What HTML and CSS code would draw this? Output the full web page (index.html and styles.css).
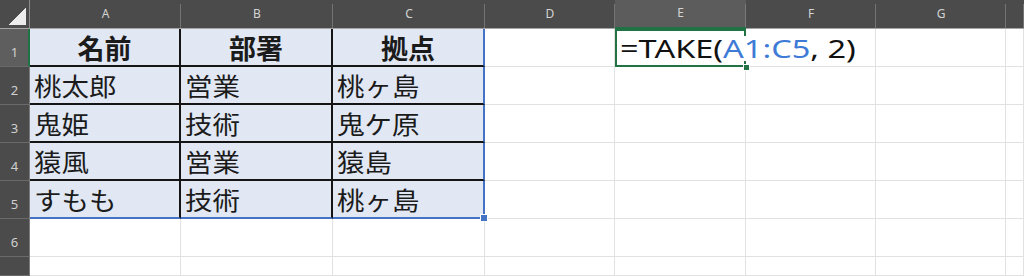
FILE: index.html
```html
<!DOCTYPE html>
<html lang="ja">
<head>
<meta charset="utf-8">
<title>TAKE</title>
<link rel="stylesheet" href="styles.css">
</head>
<body>
<div class="sheet">
  <div class="corner"><span class="tri"></span></div>
  <div class="ch">A</div>
  <div class="ch">B</div>
  <div class="ch">C</div>
  <div class="ch">D</div>
  <div class="ch sel">E</div>
  <div class="ch">F</div>
  <div class="ch">G</div>
  <div class="ch"></div>

  <div class="rh sel">1</div>
  <div class="c t head"><span class="jp">名前</span></div>
  <div class="c t head"><span class="jp">部署</span></div>
  <div class="c t head lc"><span class="jp">拠点</span></div>
  <div class="c"></div>
  <div class="c active"><span class="formula">=TAKE(<span class="ref">A1:C5</span>, 2)</span></div>
  <div class="c"></div>
  <div class="c"></div>
  <div class="c"></div>

  <div class="rh">2</div>
  <div class="c t"><span class="jp">桃太郎</span></div>
  <div class="c t"><span class="jp">営業</span></div>
  <div class="c t lc"><span class="jp">桃ヶ島</span></div>
  <div class="c"></div>
  <div class="c"></div>
  <div class="c"></div>
  <div class="c"></div>
  <div class="c"></div>

  <div class="rh">3</div>
  <div class="c t"><span class="jp">鬼姫</span></div>
  <div class="c t"><span class="jp">技術</span></div>
  <div class="c t lc"><span class="jp">鬼ケ原</span></div>
  <div class="c"></div>
  <div class="c"></div>
  <div class="c"></div>
  <div class="c"></div>
  <div class="c"></div>

  <div class="rh">4</div>
  <div class="c t"><span class="jp">猿風</span></div>
  <div class="c t"><span class="jp">営業</span></div>
  <div class="c t lc"><span class="jp">猿島</span></div>
  <div class="c"></div>
  <div class="c"></div>
  <div class="c"></div>
  <div class="c"></div>
  <div class="c"></div>

  <div class="rh">5</div>
  <div class="c t lr"><span class="jp">すもも</span></div>
  <div class="c t lr"><span class="jp">技術</span></div>
  <div class="c t lc lr handle"><span class="jp">桃ヶ島</span></div>
  <div class="c"></div>
  <div class="c"></div>
  <div class="c"></div>
  <div class="c"></div>
  <div class="c"></div>

  <div class="rh">6</div>
  <div class="c"></div>
  <div class="c"></div>
  <div class="c"></div>
  <div class="c"></div>
  <div class="c"></div>
  <div class="c"></div>
  <div class="c"></div>
  <div class="c"></div>

  <div class="rh"></div>
  <div class="c"></div>
  <div class="c"></div>
  <div class="c"></div>
  <div class="c"></div>
  <div class="c"></div>
  <div class="c"></div>
  <div class="c"></div>
  <div class="c"></div>
</div>
</body>
</html>
```

FILE: styles.css
```css
html, body {
  margin: 0;
  padding: 0;
  background: #ffffff;
  overflow: hidden;
}

.sheet {
  display: grid;
  grid-template-columns: 30px 151px 152px 152px 130px 131px 130px 130px 1fr;
  grid-template-rows: 29px repeat(6, 38px) 1fr;
  width: 1024px;
  height: 276px;
  font-family: "Noto Sans", "Noto Sans CJK JP", sans-serif;
}

.sheet > div {
  box-sizing: border-box;
  min-width: 0;
}

.corner {
  background: #4b4b4b;
  border-right: 1px solid #8a8a8a;
  border-bottom: 1px solid #a5a5a5;
  display: flex;
  align-items: flex-end;
  justify-content: flex-end;
  padding: 0 3px 3px 0;
}

.tri {
  display: block;
  width: 17px;
  height: 17px;
  background: linear-gradient(to bottom right, transparent 50%, #ececec 50%);
}

.ch {
  background: linear-gradient(to right, transparent calc(100% - 1px), #747474 0) 0 4px / 100% 100% no-repeat, #4b4b4b;
  border-bottom: 1px solid #a5a5a5;
  color: #d4d4d4;
  font-size: 12px;
  display: flex;
  align-items: center;
  justify-content: center;
  padding-bottom: 2px;
}

.ch.sel {
  background: linear-gradient(to right, transparent calc(100% - 1px), #7a7a7a 0) 0 4px / 100% 100% no-repeat, #5c5c5c;
  border-bottom: 2px solid #1f7244;
}

.rh {
  background: #4b4b4b;
  border-right: 1px solid #7c7c7c;
  border-bottom: 1px solid #6a6a6a;
  color: #d0d0d0;
  font-size: 13px;
  line-height: 1;
  display: flex;
  align-items: flex-end;
  justify-content: center;
  padding-bottom: 7px;
}

.rh.sel {
  background: #5e5e5e;
  border-right: 2px solid #1f7244;
  padding-left: 1px;
}

.c {
  border-right: 1px solid #e1e1e1;
  border-bottom: 1px solid #e1e1e1;
  display: flex;
  align-items: center;
}

.t {
  background: #e1e8f4;
  border-right: 2px solid #151515;
  border-bottom: 2px solid #151515;
  padding-left: 4px;
  color: #1b1b1b;
}

.t.lc { border-right-color: #4472c4; }
.t.lr { border-bottom-color: #4472c4; }

.jp {
  display: inline-block;
  font-family: "Noto Sans CJK JP", sans-serif;
  font-size: 25px;
  line-height: 1;
  transform: scaleX(1.1);
  transform-origin: left center;
  white-space: nowrap;
}

.head {
  justify-content: center;
  padding-left: 0;
}

.head .jp {
  font-weight: 700;
  font-size: 27px;
  transform: none;
}

.handle { position: relative; }
.handle::after {
  content: "";
  position: absolute;
  right: -5px;
  bottom: -5px;
  width: 6px;
  height: 6px;
  background: #4472c4;
  border: 1px solid #ffffff;
}

.active {
  position: relative;
  border-right: 0;
  border-bottom: 0;
  box-shadow: inset 0 0 0 2px #217346;
  overflow: visible;
  white-space: nowrap;
  padding-left: 5px;
}

.active::after {
  content: "";
  position: absolute;
  right: -4px;
  bottom: -4px;
  width: 5px;
  height: 5px;
  background: #217346;
  border: 1px solid #ffffff;
}

.formula {
  display: inline-block;
  font-family: "Noto Sans", sans-serif;
  font-size: 25px;
  line-height: 1;
  color: #111111;
  background: #ffffff;
  transform: scaleX(1.3);
  transform-origin: left center;
  position: relative;
  z-index: 1;
}

.ref { color: #3d7bd6; }
```
